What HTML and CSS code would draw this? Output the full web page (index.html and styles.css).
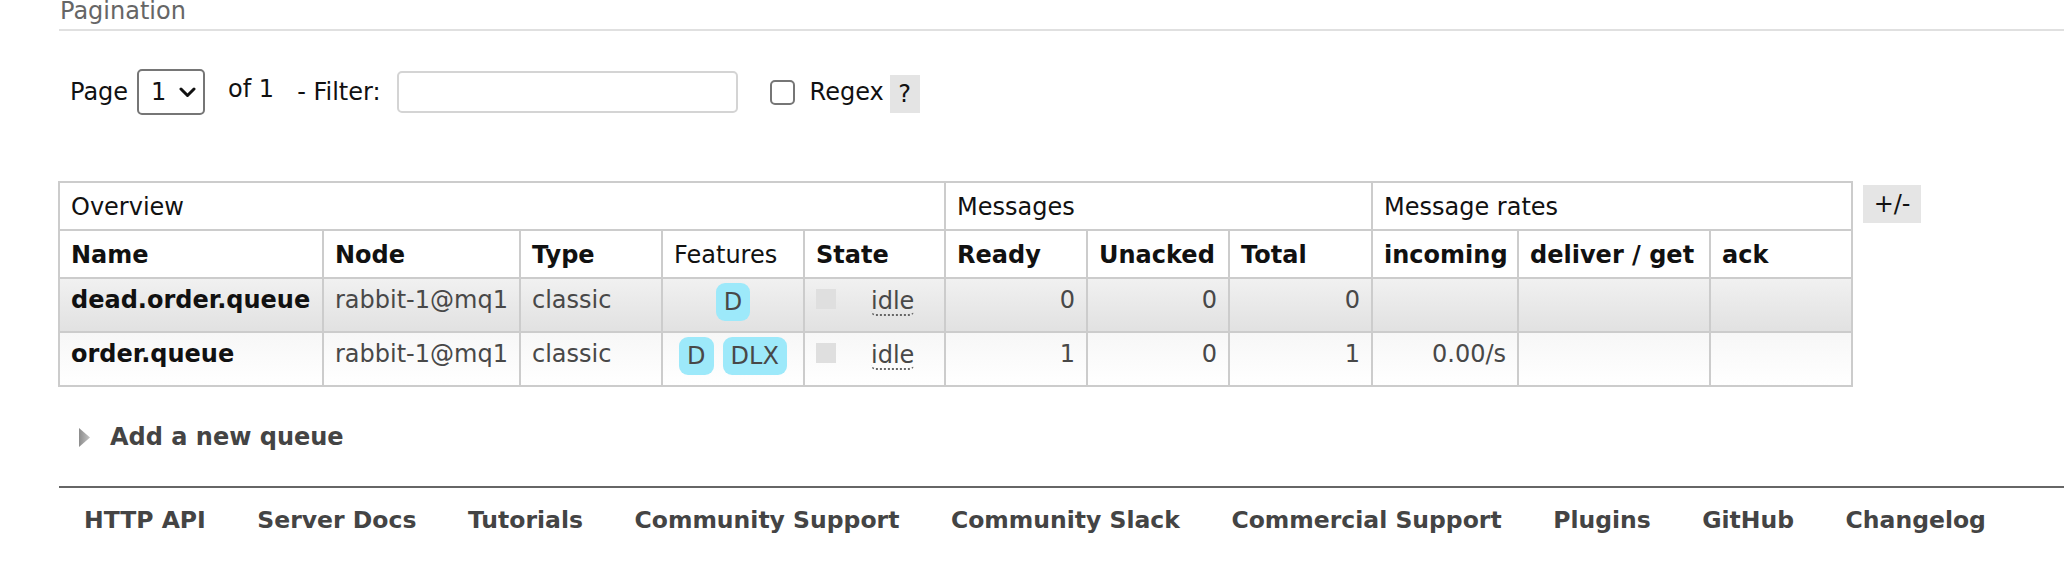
FILE: index.html
```html
<!DOCTYPE html>
<html>
<head>
<meta charset="utf-8">
<link rel="stylesheet" href="styles.css">
</head>
<body>
<div class="main">
  <h2 class="section-title">Pagination</h2>
  <div class="pager">
    <span class="lbl">Page</span>
    <div class="select"><span class="sel-val">1</span><svg class="chev" width="17" height="11" viewBox="0 0 17 11"><polyline points="2,2 8.5,8.5 15,2" fill="none" stroke="#111" stroke-width="3" stroke-linecap="round" stroke-linejoin="round"/></svg></div>
    <span class="lbl of">of 1</span>
    <span class="lbl filter">- Filter:</span>
    <input class="filter-input" type="text">
    <span class="checkbox"></span>
    <span class="lbl regex">Regex</span>
    <span class="help">?</span>
  </div>

  <div class="table-wrap">
    <table class="list">
      <colgroup>
        <col class="c-name"><col class="c-node"><col class="c-type"><col class="c-feat"><col class="c-state">
        <col class="c-ready"><col class="c-unacked"><col class="c-total">
        <col class="c-incoming"><col class="c-deliver"><col class="c-ack">
      </colgroup>
      <thead>
        <tr class="group">
          <th colspan="5">Overview</th>
          <th colspan="3">Messages</th>
          <th colspan="3">Message rates</th>
        </tr>
        <tr class="cols">
          <th class="b">Name</th>
          <th class="b">Node</th>
          <th class="b">Type</th>
          <th>Features</th>
          <th class="b">State</th>
          <th class="b">Ready</th>
          <th class="b">Unacked</th>
          <th class="b">Total</th>
          <th class="b">incoming</th>
          <th class="b">deliver / get</th>
          <th class="b">ack</th>
        </tr>
      </thead>
      <tbody>
        <tr class="alt1">
          <td class="qname">dead.order.queue</td>
          <td>rabbit-1@mq1</td>
          <td>classic</td>
          <td class="feat"><div class="badges"><span class="badge">D</span></div></td>
          <td><div class="state"><span class="sq"></span><abbr class="idle">idle</abbr></div></td>
          <td class="num">0</td>
          <td class="num">0</td>
          <td class="num">0</td>
          <td class="num"></td>
          <td class="num"></td>
          <td class="num"></td>
        </tr>
        <tr class="alt2">
          <td class="qname">order.queue</td>
          <td>rabbit-1@mq1</td>
          <td>classic</td>
          <td class="feat"><div class="badges"><span class="badge">D</span><span class="badge">DLX</span></div></td>
          <td><div class="state"><span class="sq"></span><abbr class="idle">idle</abbr></div></td>
          <td class="num">1</td>
          <td class="num">0</td>
          <td class="num">1</td>
          <td class="num">0.00/s</td>
          <td class="num"></td>
          <td class="num"></td>
        </tr>
      </tbody>
    </table>
    <span class="toggle">+/-</span>
  </div>

  <div class="add-queue">
    <svg class="tri" width="11" height="19" viewBox="0 0 11 19"><defs><linearGradient id="g" x1="0" y1="0" x2="1" y2="0"><stop offset="0" stop-color="#8c8c8c"/><stop offset="1" stop-color="#c4c4c4"/></linearGradient></defs><polygon points="0,0 11,9.5 0,19" fill="url(#g)"/></svg>
    <span class="add-label">Add a new queue</span>
  </div>

  <div class="footer">
    <a>HTTP API</a>
    <a>Server Docs</a>
    <a>Tutorials</a>
    <a>Community Support</a>
    <a>Community Slack</a>
    <a>Commercial Support</a>
    <a>Plugins</a>
    <a>GitHub</a>
    <a>Changelog</a>
  </div>
</div>
</body>
</html>
```

FILE: styles.css
```css
html, body {
  margin: 0;
  padding: 0;
  background: #fff;
}
body {
  font-family: "DejaVu Sans", Verdana, sans-serif;
  font-size: 24px;
  line-height: 28px;
  color: #484848;
  overflow: hidden;
}
.main {
  padding-left: 59px;
}
.section-title {
  margin: -3px 0 0 0;
  padding: 0 0 4px 1px;
  font-size: 24px;
  line-height: 28px;
  font-weight: normal;
  color: #666;
  border-bottom: 2px solid #e0e0e0;
}
.pager {
  display: flex;
  align-items: center;
  margin-top: 38px;
  padding-left: 11px;
  height: 46px;
  color: #111;
}
.lbl {
  white-space: nowrap;
}
.select {
  box-sizing: border-box;
  width: 68px;
  height: 46px;
  margin-left: 9px;
  border: 2px solid #767676;
  border-radius: 5px;
  display: flex;
  align-items: center;
  padding-left: 12px;
  background: #fff;
}
.sel-val {
  color: #111;
}
.chev {
  margin-left: 13px;
}
.of {
  margin-left: 23px;
  margin-bottom: 6px;
}
.filter {
  margin-left: 23px;
}
.filter-input {
  box-sizing: border-box;
  width: 341px;
  height: 42px;
  margin: 0 0 0 16px;
  border: 2px solid #d4d4d4;
  border-radius: 5px;
  background: #fff;
  outline: none;
  padding: 0;
}
.checkbox {
  box-sizing: border-box;
  width: 25px;
  height: 25px;
  margin-left: 32px;
  border: 2px solid #767676;
  border-radius: 5px;
  background: #fff;
}
.regex {
  margin-left: 15px;
}
.help {
  width: 30px;
  height: 38px;
  margin-left: 6px;
  background: #e4e4e4;
  display: flex;
  align-items: center;
  justify-content: center;
  color: #111;
  margin-top: 4px;
}

.table-wrap {
  display: flex;
  align-items: flex-start;
  margin-top: 66px;
  margin-left: -1px;
}
table.list {
  border-collapse: collapse;
  table-layout: fixed;
  width: 1795px;
}
col.c-name { width: 264px; }
col.c-node { width: 197px; }
col.c-type { width: 142px; }
col.c-feat { width: 142px; }
col.c-state { width: 141px; }
col.c-ready { width: 142px; }
col.c-unacked { width: 142px; }
col.c-total { width: 143px; }
col.c-incoming { width: 146px; }
col.c-deliver { width: 192px; }
col.c-ack { width: 142px; }

table.list th,
table.list td {
  border: 2px solid #cccccc;
  padding: 10px 11px 8px;
  text-align: left;
  white-space: nowrap;
  overflow: hidden;
}
table.list th {
  font-weight: normal;
  color: #111;
  background: #fff;
  vertical-align: middle;
}
table.list th.b {
  font-weight: bold;
}
table.list td {
  vertical-align: top;
  padding-top: 7px;
  padding-bottom: 5px;
}
tr.alt1 {
  background-color: #e8e8e8;
  background-image: linear-gradient(#f1f1f1, #e1e1e1);
}
tr.alt2 {
  background-color: #fcfcfc;
  background-image: linear-gradient(#f7f7f7, #ffffff);
}
table.list td.qname {
  font-weight: bold;
  color: #111;
}
table.list td.num {
  text-align: right;
}
table.list td.feat {
  padding-top: 4px;
  padding-bottom: 10px;
}
.badges {
  display: flex;
  justify-content: center;
  gap: 9px;
}
.badge {
  display: block;
  height: 38px;
  line-height: 38px;
  padding: 0 8px;
  border-radius: 9px;
  background: #9de9fa;
  color: #484848;
}
.state {
  display: flex;
  align-items: center;
  height: 28px;
  margin-top: -1px;
}
.sq {
  width: 20px;
  height: 20px;
  background: #dfdfdf;
  margin-right: 35px;
}
abbr.idle {
  text-decoration: none;
  line-height: 26px;
  border-bottom: 2px dotted #666;
  border-radius: 0 0 5px 5px;
  margin-top: 6px;
}
.toggle {
  box-sizing: border-box;
  width: 58px;
  height: 38px;
  margin-left: 10px;
  margin-top: 4px;
  background: #e5e5e5;
  color: #111;
  display: flex;
  align-items: center;
  justify-content: center;
}

.add-queue {
  display: flex;
  align-items: center;
  margin-top: 36px;
  height: 28px;
  padding-left: 20px;
}
.tri {
  display: block;
}
.add-label {
  margin-left: 20px;
  font-weight: bold;
  font-size: 24px;
  color: #444;
}

.footer {
  margin-top: 35px;
  border-top: 2px solid #666;
  padding-top: 18px;
  display: flex;
  height: 40px;
}
.footer a {
  font-weight: bold;
  font-size: 23.5px;
  color: #444;
  padding: 0 26.5px 0 25px;
  white-space: nowrap;
}
```
